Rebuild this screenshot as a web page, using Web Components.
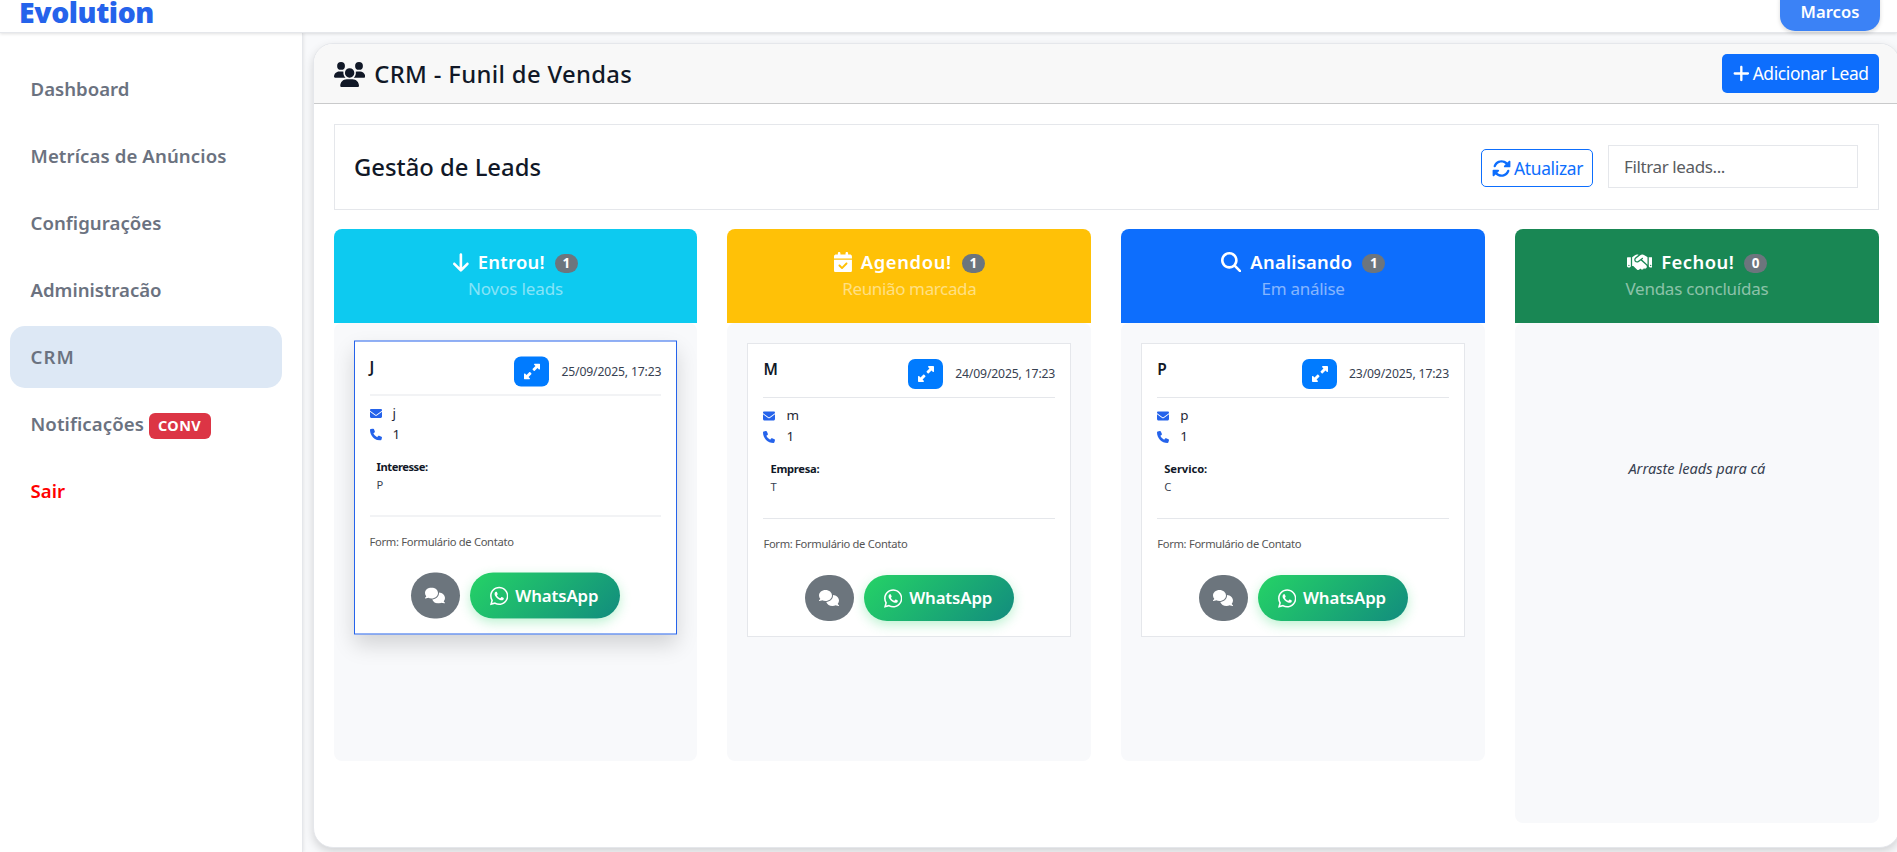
<!DOCTYPE html>
<html lang="pt-BR">
<head>
<meta charset="utf-8">
<title>Evolution - CRM</title>
<style>
html,body{margin:0;height:100%;overflow:hidden}
body{font-family:"Noto Sans","Open Sans",sans-serif;background:#f8f9fb;color:#111827}
</style>
</head>
<body>
<crm-app></crm-app>
<script>
const ICONS={
users:[640,"M144 0a80 80 0 1 1 0 160A80 80 0 1 1 144 0zM512 0a80 80 0 1 1 0 160A80 80 0 1 1 512 0zM0 298.7C0 239.8 47.8 192 106.7 192h42.7c15.9 0 31 3.5 44.6 9.7c-1.3 7.2-1.9 14.7-1.9 22.3c0 38.2 16.8 72.5 43.3 96c-.2 0-.4 0-.7 0H21.3C9.6 320 0 310.4 0 298.7zM405.3 320c-.2 0-.4 0-.7 0c26.6-23.5 43.3-57.8 43.3-96c0-7.6-.7-15-1.9-22.3c13.6-6.3 28.7-9.7 44.6-9.7h42.7C592.2 192 640 239.8 640 298.7c0 11.8-9.6 21.3-21.3 21.3H405.3zM224 224a96 96 0 1 1 192 0 96 96 0 1 1 -192 0zM128 485.3C128 411.7 187.7 352 261.3 352H378.7C452.3 352 512 411.7 512 485.3c0 14.7-11.9 26.7-26.7 26.7H154.7c-14.7 0-26.7-11.9-26.7-26.7z"],
down:[384,"M169.4 470.6c12.5 12.5 32.8 12.5 45.3 0l160-160c12.5-12.5 12.5-32.8 0-45.3s-32.8-12.5-45.3 0L224 370.8 224 64c0-17.7-14.3-32-32-32s-32 14.3-32 32l0 306.7L54.6 265.4c-12.5-12.5-32.8-12.5-45.3 0s-12.5 32.8 0 45.3l160 160z"],
calendar:[448,"M128 0c17.7 0 32 14.3 32 32V64H288V32c0-17.7 14.3-32 32-32s32 14.3 32 32V64h48c26.5 0 48 21.5 48 48v48H0V112C0 85.5 21.5 64 48 64H96V32c0-17.7 14.3-32 32-32zM0 192H448V464c0 26.5-21.5 48-48 48H48c-26.5 0-48-21.5-48-48V192zM329 305c9.4-9.4 9.4-24.6 0-33.9s-24.6-9.4-33.9 0l-95 95-47-47c-9.4-9.4-24.6-9.4-33.9 0s-9.4 24.6 0 33.9l64 64c9.4 9.4 24.6 9.4 33.9 0L329 305z"],
search:[512,"M416 208c0 45.9-14.9 88.3-40 122.7L502.6 457.4c12.5 12.5 12.5 32.8 0 45.3s-32.8 12.5-45.3 0L330.7 376c-34.4 25.2-76.8 40-122.7 40C93.1 416 0 322.9 0 208S93.1 0 208 0S416 93.1 416 208zM208 352a144 144 0 1 0 0-288 144 144 0 1 0 0 288z"],
handshake:[640,"M323.4 85.2l-96.8 78.4c-16.1 13-19.2 36.4-7 53.1c12.9 17.8 38 21.3 55.3 7.8l99.3-77.2c7-5.4 17-4.2 22.5 2.8s4.2 17-2.8 22.5l-20.9 16.2L512 316.8V128h-.7l-3.9-2.5L434.8 79c-15.3-9.8-33.2-15-51.4-15c-21.8 0-43 7.5-60 21.2zm22.8 124.4l-51.7 40.2C263 274.3 217.3 268 193.7 235.6c-22.2-30.5-16.6-73.1 12.7-96.8l83.2-67.3c-11.6-4.9-24.1-7.4-36.8-7.4C234 64 215.7 69.6 200 80l-72 48V352h28.2l91.4 83.4c19.6 17.9 49.9 16.5 67.8-3.1c5.5-6.1 9.2-13.2 11.1-20.6l17 15.6c19.5 17.9 49.9 16.6 67.8-2.9c4.5-4.9 7.8-10.6 9.9-16.5c19.4 13 45.8 10.3 62.1-7.5c17.9-19.5 16.6-49.9-2.9-67.8l-134.2-123zM16 128c-8.8 0-16 7.2-16 16V352c0 17.7 14.3 32 32 32H64c17.7 0 32-14.3 32-32V128H16zM48 320a16 16 0 1 1 0 32 16 16 0 1 1 0-32zM544 128V352c0 17.7 14.3 32 32 32h32c17.7 0 32-14.3 32-32V144c0-8.8-7.2-16-16-16H544zm32 208a16 16 0 1 1 32 0 16 16 0 1 1 -32 0z"],
expand:[512,"M344 0H488c13.3 0 24 10.7 24 24V168c0 9.7-5.8 18.5-14.8 22.2s-19.3 1.7-26.2-5.2l-39-39-87 87c-9.4 9.4-24.6 9.4-33.9 0l-32-32c-9.4-9.4-9.4-24.6 0-33.9l87-87L327 41c-6.9-6.9-8.9-17.2-5.2-26.2S334.3 0 344 0zM168 512H24c-13.3 0-24-10.7-24-24V344c0-9.7 5.8-18.5 14.8-22.2s19.3-1.7 26.2 5.2l39 39 87-87c9.4-9.4 24.6-9.4 33.9 0l32 32c9.4 9.4 9.4 24.6 0 33.9l-87 87 39 39c6.9 6.9 8.9 17.2 5.2 26.2s-12.5 14.8-22.2 14.8z"],
envelope:[512,"M48 64C21.5 64 0 85.5 0 112c0 15.1 7.1 29.3 19.2 38.4L236.8 313.6c11.4 8.5 27 8.5 38.4 0L492.8 150.4c12.1-9.1 19.2-23.3 19.2-38.4c0-26.5-21.5-48-48-48H48zM0 176V384c0 35.3 28.7 64 64 64H448c35.3 0 64-28.7 64-64V176L294.4 339.2c-22.8 17.1-54 17.1-76.8 0L0 176z"],
phone:[512,"M164.9 24.6c-7.7-18.6-28-28.5-47.4-23.2l-88 24C12.1 30.2 0 46 0 64C0 311.4 200.6 512 448 512c18 0 33.8-12.1 38.6-29.5l24-88c5.3-19.4-4.6-39.7-23.2-47.4l-96-40c-16.3-6.8-35.2-2.1-46.3 11.6L304.7 368C234.3 334.7 177.3 277.7 144 207.3L193.3 167c13.7-11.2 18.4-30 11.6-46.3l-40-96z"],
comments:[640,"M208 352c114.9 0 208-78.8 208-176S322.9 0 208 0S0 78.8 0 176c0 38.6 14.7 74.3 39.6 103.4c-3.5 9.4-8.7 17.7-14.2 24.7c-4.8 6.2-9.7 11-13.3 14.3c-1.8 1.6-3.3 2.9-4.3 3.7c-.5 .4-.9 .7-1.1 .8l-.2 .2 0 0 0 0C1 327.2-1.4 334.4 .8 340.9S9.1 352 16 352c21.8 0 43.8-5.6 62.1-12.5c9.2-3.5 17.8-7.4 25.3-11.4C134.1 343.3 169.8 352 208 352zM448 176c0 112.3-99.1 196.9-216.5 207C255.8 457.4 336.4 512 432 512c38.2 0 73.9-8.7 104.7-23.9c7.5 4 16 7.9 25.2 11.4c18.3 6.9 40.3 12.5 62.1 12.5c6.9 0 13.1-4.5 15.2-11.1c2.1-6.6-.2-13.8-5.8-17.9l0 0 0 0-.2-.2c-.2-.2-.6-.4-1.1-.8c-1-.8-2.5-2-4.3-3.7c-3.6-3.3-8.5-8.1-13.3-14.3c-5.5-7-10.7-15.4-14.2-24.7c24.9-29 39.6-64.7 39.6-103.4c0-92.8-84.9-168.9-192.6-175.5c.4 5.1 .6 10.3 .6 15.5z"],
whatsapp:[448,"M380.9 97.1C339 55.1 283.2 32 223.9 32c-122.4 0-222 99.6-222 222 0 39.1 10.2 77.3 29.6 111L0 480l117.7-30.9c32.4 17.7 68.9 27 106.1 27h.1c122.3 0 224.1-99.6 224.1-222 0-59.3-25.2-115-67.1-157zm-157 341.6c-33.2 0-65.7-8.9-94-25.7l-6.7-4-69.8 18.3L72 359.2l-4.4-7c-18.5-29.4-28.2-63.3-28.2-98.2 0-101.7 82.8-184.5 184.6-184.5 49.3 0 95.6 19.2 130.4 54.1 34.8 34.9 56.2 81.2 56.1 130.5 0 101.8-84.9 184.6-186.6 184.6zm101.2-138.2c-5.5-2.8-32.8-16.2-37.9-18-5.1-1.9-8.8-2.8-12.5 2.8-3.7 5.6-14.3 18-17.6 21.8-3.2 3.7-6.5 4.2-12 1.4-32.6-16.3-54-29.1-75.5-66-5.7-9.8 5.7-9.1 16.3-30.3 1.8-3.7.9-6.9-.5-9.7-1.4-2.8-12.5-30.1-17.1-41.2-4.5-10.8-9.1-9.3-12.5-9.5-3.2-.2-6.9-.2-10.6-.2-3.7 0-9.7 1.4-14.8 6.9-5.1 5.6-19.4 19-19.4 46.3 0 27.3 19.9 53.7 22.6 57.4 2.8 3.7 39.1 59.7 94.8 83.8 35.2 15.2 49 16.5 66.6 13.9 10.7-1.6 32.8-13.4 37.4-26.4 4.6-13 4.6-24.1 3.2-26.4-1.3-2.5-5-3.9-10.5-6.6z"],
plus:[448,"M256 80c0-17.7-14.3-32-32-32s-32 14.3-32 32V224H48c-17.7 0-32 14.3-32 32s14.3 32 32 32H192V432c0 17.7 14.3 32 32 32s32-14.3 32-32V288H400c17.7 0 32-14.3 32-32s-14.3-32-32-32H256V80z"],
rotate:[512,"M142.9 142.9c62.2-62.2 162.7-62.5 225.3-1L327 183c-6.9 6.9-8.9 17.2-5.2 26.2s12.5 14.8 22.2 14.8H463.5c0 0 0 0 0 0H472c13.3 0 24-10.7 24-24V72c0-9.7-5.8-18.5-14.8-22.2s-19.3-1.7-26.2 5.2L413.4 96.6c-87.6-86.5-228.7-86.2-315.8 1C73.2 122 55.6 150.7 44.8 181.4c-5.9 16.7 2.9 34.9 19.5 40.8s34.9-2.9 40.8-19.5c7.7-21.8 20.2-42.3 37.8-59.8zM16 312v7.6 .7V440c0 9.7 5.8 18.5 14.8 22.2s19.3 1.7 26.2-5.2l41.6-41.6c87.6 86.5 228.7 86.2 315.8-1c24.4-24.4 42.1-53.1 52.9-83.7c5.9-16.7-2.9-34.9-19.5-40.8s-34.9 2.9-40.8 19.5c-7.7 21.8-20.2 42.3-37.8 59.8c-62.2 62.2-162.7 62.5-225.3 1L185 329c6.9-6.9 8.9-17.2 5.2-26.2s-12.5-14.8-22.2-14.8H48.4h-.7H40c-13.3 0-24 10.7-24 24z"]
};

class Base extends HTMLElement{
  connectedCallback(){
    if(this.shadowRoot)return;
    this.attachShadow({mode:"open"}).innerHTML=this.render();
    if(this.ready)this.ready();
  }
  a(n){return this.getAttribute(n)||""}
}

/* Icon: size = height of the 512-unit box */
customElements.define("ui-icon",class extends Base{
  render(){const [w,d]=ICONS[this.a("name")],s=+this.a("size");
    return `<style>:host{display:block;flex:none;height:${s}px;width:${s*w/512}px}svg{display:block}</style><svg width="${s*w/512}" height="${s}" viewBox="0 0 ${w} 512" fill="currentColor"><path d="${d}"/></svg>`}
});

/* Text whose tracking is adjusted to a given advance width */
customElements.define("ui-text",class extends Base{
  render(){return `<style>:host{display:block;flex:none;white-space:nowrap;width:${this.a("w")}px}span{display:inline-block;vertical-align:top}</style><span><slot></slot></span>`}
  ready(){const s=this.shadowRoot.querySelector("span"),n=this.textContent.length;
    s.style.letterSpacing=(+this.a("w")-s.getBoundingClientRect().width)/n+"px"}
});

customElements.define("top-bar",class extends Base{
  render(){return `<style>
:host{display:flex;position:relative;z-index:2;flex:none;box-sizing:border-box;height:33px;background:#fff;border-bottom:1px solid #e5e7eb;box-shadow:0 1px 3px rgba(0,0,0,.12);justify-content:space-between;align-items:flex-start;padding:0 17px 0 19px}
.logo{font-size:28.4px;line-height:24px;font-weight:900;color:#2563eb}
.user{height:46px;margin-top:-15px;width:100px;display:flex;justify-content:center;background:#3b82f6;border-radius:15px;box-shadow:0 2px 4px rgba(0,0,0,.15);color:#fff;font-size:16.6px;font-weight:600;line-height:53px}
</style><ui-text class="logo" w="135">Evolution</ui-text><div class="user"><ui-text w="59">Marcos</ui-text></div>`}
});

customElements.define("nav-item",class extends Base{
  render(){return `<style>
:host{display:flex;box-sizing:border-box;height:62px;padding:0 20px 0 20.5px;border-radius:15px;font-size:18.6px;line-height:62px;font-weight:600;color:#6b7280}
:host([active]){background:#dde8f5}
:host([danger]){color:#f00}
b{margin:20px 0 0 4.5px;width:62px;height:26px;border-radius:6px;background:#dc3545;color:#fff;font-size:14.4px;line-height:26px;display:flex;justify-content:center;font-weight:700}
</style><ui-text w="${this.a("w")}">${this.a("label")}</ui-text>${this.a("badge")?`<b><ui-text w="43">${this.a("badge")}</ui-text></b>`:""}`}
});

customElements.define("side-bar",class extends Base{
  render(){return `<style>
:host{display:flex;flex-direction:column;gap:5px;flex:none;box-sizing:border-box;width:303px;padding:25px 20px 0 10px;background:#fff;border-right:1px solid #e5e7eb;box-shadow:1px 0 3px rgba(0,0,0,.08)}
</style>
<nav-item label="Dashboard" w="99"></nav-item>
<nav-item label="Metrícas de Anúncios" w="196"></nav-item>
<nav-item label="Configurações" w="131"></nav-item>
<nav-item label="Administracão" w="131"></nav-item>
<nav-item active label="CRM" w="44.5"></nav-item>
<nav-item label="Notificações" w="113.5" badge="CONV"></nav-item>
<nav-item danger label="Sair" w="34.5"></nav-item>`}
});

customElements.define("lead-card",class extends Base{
  render(){const g=n=>this.a(n);return `<style>
:host{display:block;box-sizing:border-box;height:294px;background:#fff;border:1px solid #e5e7eb;padding:15px}
:host([raised]){border-color:#2563eb;box-shadow:0 10px 20px rgba(0,0,0,.15);transform:translateY(-2.5px)}
.head{display:flex;height:38px;border-bottom:1px solid #e5e7eb}
.name{font-size:15.5px;line-height:20px;font-weight:600;flex:1}
.exp{width:35px;height:30px;border-radius:7px;background:#007bff;color:#fff;display:flex;align-items:center;justify-content:center}
.date{margin:5px 0 0 12px;font-size:12.2px;line-height:20px;color:#374151}
.rows{padding-top:7px}
.row{display:flex;align-items:center;height:21px;font-size:13.4px;line-height:21px;color:#1f2937}
.row ui-icon{color:#2563eb;margin-right:11px}
.field{margin:13px 0 22px 7px;font-size:11.2px;line-height:18px;color:#374151}
.field ui-text:first-child{font-weight:700;color:#111827}
.form{border-top:1px solid #e5e7eb;padding-top:16px;font-size:11.2px;line-height:18px;color:#555}
.act{display:flex;justify-content:center;gap:10px;margin-top:22px}
.chat{width:49px;height:46px;border-radius:23px;background:#6c757d;color:#fff;display:flex;align-items:center;justify-content:center}
.wa{box-sizing:border-box;width:150px;height:46px;border-radius:23px;padding-left:20px;background:linear-gradient(135deg,#25d366,#128c7e);box-shadow:0 4px 12px rgba(37,211,102,.3);color:#fff;display:flex;align-items:center;font-size:16.8px;font-weight:600;line-height:46px}
.wa ui-text{margin:0 0 0 7px}
</style>
<div class="head"><span class="name">${g("name")}</span><span class="exp"><ui-icon name="expand" size="16"></ui-icon></span><ui-text class="date" w="100">${g("date")}</ui-text></div>
<div class="rows"><div class="row"><ui-icon name="envelope" size="12"></ui-icon>${g("mail")}</div><div class="row"><ui-icon name="phone" size="12"></ui-icon>1</div></div>
<div class="field"><ui-text w="${g("fw")}">${g("field")}</ui-text>${g("value")}</div>
<div class="form"><ui-text w="144">Form: Formulário de Contato</ui-text></div>
<div class="act"><span class="chat"><ui-icon name="comments" size="16"></ui-icon></span><span class="wa"><ui-icon name="whatsapp" size="21"></ui-icon><ui-text w="83">WhatsApp</ui-text></span></div>`}
});

customElements.define("kanban-column",class extends Base{
  render(){const g=n=>this.a(n);return `<style>
:host{display:block}
header{box-sizing:border-box;height:94px;padding-top:18px;border-radius:8px 8px 0 0;background:${g("color")};color:#fff}
.t{display:flex;justify-content:center;align-items:center;height:30px;font-size:18.4px;line-height:30px;font-weight:600}
.t ui-text{margin:-1px 10px 0 9px}
.n{width:23px;height:19px;margin-top:3px;border-radius:10px;background:#6c757d;font-size:13.5px;line-height:19px;font-weight:700;text-align:center}
.s{display:flex;justify-content:center;font-size:17px;line-height:24px;color:rgba(255,255,255,.5)}
.b{box-sizing:border-box;height:${g("height")}px;border-radius:8px;background:#f8f9fb;padding:20px}
</style>
<header><div class="t"><ui-icon name="${g("icon")}" size="${g("is")}"></ui-icon><ui-text w="${g("tw")}">${g("label")}</ui-text><span class="n">${g("count")}</span></div>
<div class="s"><ui-text w="${g("sw")}">${g("sub")}</ui-text></div></header><div class="b"><slot></slot></div>`}
});

customElements.define("empty-hint",class extends Base{
  render(){return `<style>:host{display:flex;justify-content:center;padding-top:113px;font-size:14.6px;line-height:24px;font-style:italic;color:#374151}</style><ui-text w="137">Arraste leads para cá</ui-text>`}
});

customElements.define("crm-panel",class extends Base{
  render(){return `<style>
:host{display:block;box-sizing:border-box;flex:none;width:1587px;height:805px;margin:10px 0 0 10px;background:#fff;border:1px solid #e5e7eb;border-radius:20px;box-shadow:0 4px 10px rgba(0,0,0,.15);overflow:hidden}
.head{box-sizing:border-box;height:60px;padding:10px 20px 0;background:#f8f8f8;border-bottom:1px solid #c9cacb;display:flex}
.head ui-icon{margin:8px 9px 0 0}
.h{font-size:23.8px;font-weight:500;line-height:40px}
.grow{flex:1}
.add{box-sizing:border-box;width:157px;height:39px;padding-left:11px;border-radius:5px;background:#0d6efd;color:#fff;display:flex;font-size:17.4px;line-height:39px}
.add ui-icon{margin:10px 3px 0 0}
.tools{box-sizing:border-box;margin:20px 20px 0;height:86px;border:1px solid #e5e7eb;padding:20px 20px 0 19px;display:flex}
.tools .h{line-height:44px}
.ref{box-sizing:border-box;width:112px;height:38px;margin:4px 15px 0 0;border:1px solid #0d6efd;border-radius:5px;color:#0d6efd;padding-left:10px;display:flex;align-items:center;font-size:17.4px;line-height:38px}
.ref ui-text{margin-left:3px}
.inp{box-sizing:border-box;width:250px;height:43px;border:1px solid #e5e7eb;padding-left:15px;font-size:17px;line-height:41px;color:#595c5f}
.board{margin:19px 20.2px 0 19.6px;display:grid;grid-template-columns:repeat(4,1fr);gap:30px;align-items:start}
</style>
<div class="head"><ui-icon name="users" size="25"></ui-icon><ui-text class="h" w="258">CRM - Funil de Vendas</ui-text><span class="grow"></span><div class="add"><ui-icon name="plus" size="19"></ui-icon><ui-text w="116">Adicionar Lead</ui-text></div></div>
<div class="tools"><ui-text class="h" w="187">Gestão de Leads</ui-text><span class="grow"></span><div class="ref"><ui-icon name="rotate" size="19"></ui-icon><ui-text w="69">Atualizar</ui-text></div><div class="inp"><ui-text w="101">Filtrar leads...</ui-text></div></div>
<div class="board">
<kanban-column color="#0dcaf0" icon="down" is="21" label="Entrou!" tw="67" count="1" sub="Novos leads" sw="95" height="438"><lead-card raised name="J" date="25/09/2025, 17:23" mail="j" field="Interesse:" fw="51" value="P"></lead-card></kanban-column>
<kanban-column color="#ffc107" icon="calendar" is="20.5" label="Agendou!" tw="91" count="1" sub="Reunião marcada" sw="134" height="438"><lead-card name="M" date="24/09/2025, 17:23" mail="m" field="Empresa:" fw="49" value="T"></lead-card></kanban-column>
<kanban-column color="#0d6efd" icon="search" is="20.5" label="Analisando" tw="102" count="1" sub="Em análise" sw="83" height="438"><lead-card name="P" date="23/09/2025, 17:23" mail="p" field="Servico:" fw="43" value="C"></lead-card></kanban-column>
<kanban-column color="#198754" icon="handshake" is="20.5" label="Fechou!" tw="73" count="0" sub="Vendas concluídas" sw="143" height="500"><empty-hint></empty-hint></kanban-column>
</div>`}
});

customElements.define("crm-app",class extends Base{
  render(){return `<style>:host{display:flex;flex-direction:column;height:100vh;overflow:hidden}.m{display:flex;flex:1;min-height:0}</style><top-bar></top-bar><div class="m"><side-bar></side-bar><crm-panel></crm-panel></div>`}
});
</script>
</body>
</html>
